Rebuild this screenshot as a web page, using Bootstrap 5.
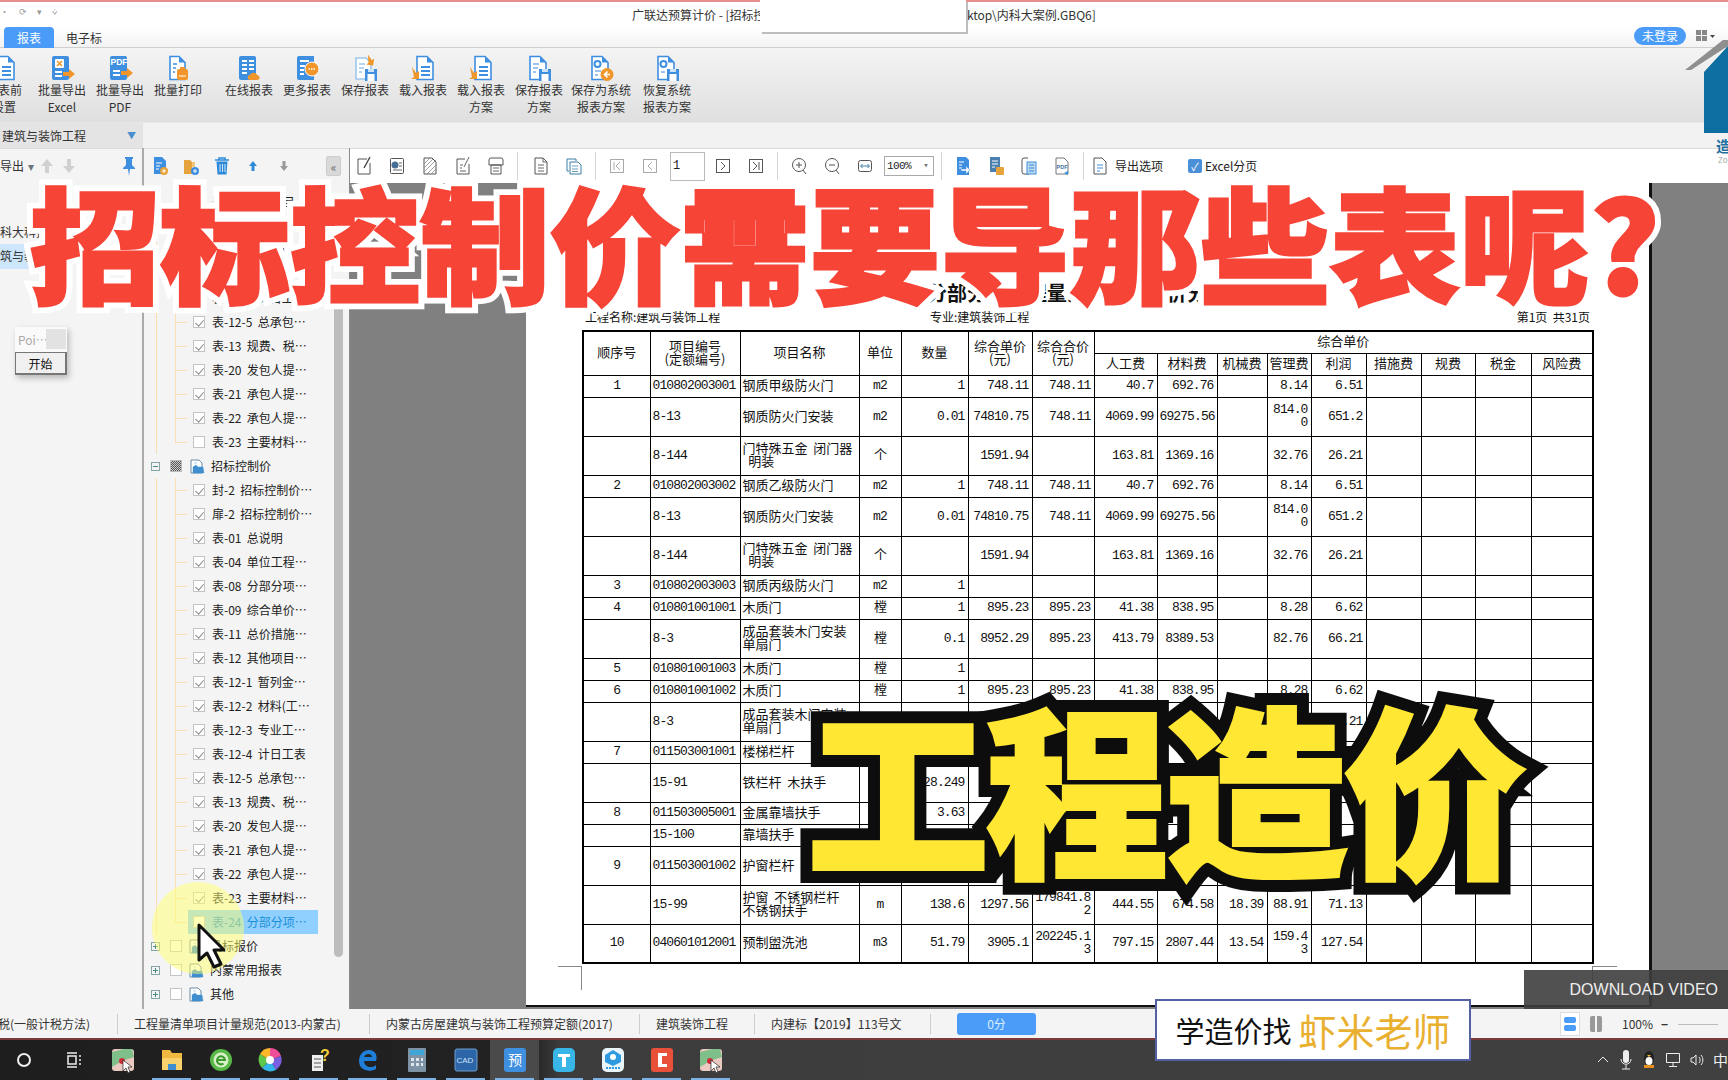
<!DOCTYPE html>
<html lang="zh-CN">
<head>
  <meta charset="UTF-8">
  <meta name="viewport" content="width=device-width, initial-scale=1.0">
  <title>广联达预算计价</title>
  <link href="https://cdn.jsdelivr.net/npm/bootstrap@5.3.0/dist/css/bootstrap.min.css" rel="stylesheet">
  <style>
    html, body { margin: 0; width: 1728px; height: 1080px; overflow: hidden; }
    body { position: relative; font: 12px/1.2 "Noto Sans CJK SC", sans-serif; color: #333; background: #f4f4f4; }
    .app { width: 1728px; height: 1080px; }

    /* 标题栏 */
    .title-row { height: 27px; border-top: 2px solid #e58f8f; background: #fff; position: relative; font-size: 12px; }
    .title-text { margin-left: 632px; line-height: 25px; white-space: nowrap; }
    .qa-tools { position: absolute; left: 0; top: 5px; color: #999; font-size: 9px; letter-spacing: 4px; }
    .tab-row { height: 21px; background: linear-gradient(#fff, #f3f3f3); border-bottom: 1px solid #cfcfcf; position: relative; }
    .tab-on { margin-left: 4px; width: 50px; height: 21px; line-height: 21px; text-align: center; color: #fff; background: #4a9cf8; border-radius: 4px 4px 0 0; }
    .tab-off { margin-left: 12px; line-height: 21px; }
    .login-pill { position: absolute; left: 1634px; top: 0; width: 52px; height: 18px; line-height: 18px; border-radius: 9px; text-align: center; color: #fff; background: #4a9cf8; }
    .grid-ic { position: absolute; left: 1696px; top: 3px; }

    /* 功能区 */
    .ribbon { height: 74px; background: linear-gradient(#f4f4f4, #dfdfdf); overflow: hidden; position: relative; }
    .rb-btn { width: 58px; flex: none; text-align: center; padding-top: 7px; line-height: 17px; white-space: nowrap; }
    .rb-btn svg { display: block; width: 26px; height: 26px; margin: 0 auto; }
    .rb-first { margin-left: -25px; }
    .rb-gap { margin-left: 13px; }
    .rb-wide { width: 66px; }
    .rb-last { margin-left: 4px; }
    .strip { height: 26px; background: #f2f2f2; border-top: 1px solid #e8e8e8; }
    .strip-left { width: 143px; background: #e4e4e4; padding-left: 2px; line-height: 25px; }
    .strip-caret { margin-left: auto; margin-right: 7px; color: #4a8fd0; font-size: 9px; }

    /* 工作区 */
    .work { height: 861px; }
    .left-col { width: 143px; flex: none; position: relative; background: #f4f4f4; border-right: 1px solid #aaa; overflow: hidden; }
    .bar { height: 35px; border-top: 1px solid #dcdcdc; background: #f4f4f4; }
    .left-list { padding-top: 37px; }
    .left-row { height: 24px; line-height: 24px; white-space: nowrap; margin-left: -12px; }
    .left-sel { background: #cde6fb; margin-left: 0; width: 34px; height: 25px; overflow: hidden; }
    .poi-box { position: absolute; left: 15px; top: 179px; width: 52px; box-shadow: 2px 3px 6px rgba(0,0,0,.25); }
    .poi-top { height: 25px; background: #fafafa; color: #aaa; line-height: 25px; padding-left: 3px; position: relative; }
    .poi-top i { position: absolute; right: 1px; top: 2px; width: 20px; height: 20px; background: #e2e2e2; }
    .poi-btn { height: 23px; line-height: 21px; text-align: center; background: #f0f0f0; color: #111; border: 1px solid #777; border-right-width: 2px; border-bottom-width: 2px; }

    .tree-col { width: 207px; flex: none; background: #f4f4f4; border-right: 1px solid #8a8a8a; position: relative; overflow: hidden; border-left: 1px solid #aaa; }
    .tree-col .tool { width: 31px; }
    .tree-list { padding-top: 7px; }
    .t-leaf { height: 24px; padding-left: 44px; --ln: #fadfb6;
      background:
        linear-gradient(var(--ln), var(--ln)) 12px 0/1px 100% no-repeat,
        linear-gradient(var(--ln), var(--ln)) 31px 0/1px 100% no-repeat,
        linear-gradient(var(--ln), var(--ln)) 31px 50%/12px 1px no-repeat; }
    .t-leaf.t-last { background:
        linear-gradient(var(--ln), var(--ln)) 12px 0/1px 100% no-repeat,
        linear-gradient(var(--ln), var(--ln)) 31px 0/1px 50% no-repeat,
        linear-gradient(var(--ln), var(--ln)) 31px 50%/12px 1px no-repeat; }
    .t-in { width: 130px; height: 24px; padding-left: 5px; white-space: nowrap; color: #222; }
    .t-on { background: #8fd0ff; color: #1a8fd8; }
    .t-cb { width: 12px; height: 12px; border: 1px solid #c4c4c4; background: #fff; flex: none; margin-right: 7px; position: relative; }
    .t-cb.ok::after { content: ""; position: absolute; left: 3px; top: 1px; width: 5px; height: 8px; border: solid #8a8a8a; border-width: 0 1px 1px 0; transform: rotate(40deg); }
    .t-cb.mix { background: repeating-conic-gradient(#555 0 25%, #ccc 0 50%) 0 0/2px 2px; border-color: #bbb; margin-right: 8px; }
    .t-parent { height: 24px; padding-left: 7px; color: #222; }
    .t-box { width: 9px; height: 9px; border: 1px solid #86a6a6; color: #4d8a8a; flex: none; margin-right: 10px; position: relative; }
    .t-box::before { content: ""; position: absolute; left: 1px; right: 1px; top: 3px; height: 1px; background: #4d8a8a; }
    .t-box.plus::after { content: ""; position: absolute; top: 1px; bottom: 1px; left: 3px; width: 1px; background: #4d8a8a; }
    .t-folder { width: 15px; height: 15px; flex: none; margin-right: 6px; }
    .t-scroll { position: absolute; left: 190px; top: 140px; width: 9px; height: 669px; background: #bcbcbc; border-radius: 5px; }
    .t-collapse { width: 15px; height: 20px; background: #d9d9d9; color: #666; font-size: 12px; line-height: 19px; text-align: center; border: 1px solid #ccc; border-radius: 2px; }

    .viewer { flex: 1; min-width: 0; }
    .view-bar { height: 35px; background: #fff; border-top: 1px solid #dcdcdc; padding-left: 0; }
    .view-start { margin-left: -3px; }
    .tool { width: 33px; height: 34px; flex: none; display: flex; align-items: center; justify-content: center; }
    .tool svg { width: 18px; height: 20px; }
    .tool-sep { width: 1px; height: 28px; background: #d5d5d5; margin: 0 4.5px; flex: none; }
    .sep-wide { margin-right: 6.5px; }
    .sep-tight { margin-right: 1.5px; }
    .tool-opt { width: 30px; }
    .page-no { width: 35px; height: 29px; border: 1px solid #bbb; padding-left: 2px; line-height: 27px; font-family: "Liberation Mono", monospace; color: #222; margin-right: 1px; }
    .zoom-box { width: 50px; height: 20px; border: 1px solid #aaa; font: 11px/18px "Liberation Mono", monospace; letter-spacing: -.6px; padding-left: 2px; margin-left: 3px; margin-right: 2px; position: relative; color: #222; }
    .zoom-box::after { content: "▾"; position: absolute; right: 5px; top: 0; color: #777; font-size: 9px; }
    .view-lbl { color: #222; white-space: nowrap; }
    .xl-check { width: 14px; height: 14px; border-radius: 2px; background: #4a90d8; color: #fff; margin-left: 25px; margin-right: 3px; font-size: 11px; line-height: 14px; text-align: center; }

    .paper-wrap { height: 826px; background: #808080; padding-left: 176px; overflow: hidden; }
    .paper { width: 1126px; height: 824px; background: #fff; border-right: 3px solid #111; border-bottom: 2px solid #111; position: relative; padding: 99px 0 0 56px; color: #111; }
    .paper-title { height: 22px; width: 1010px; text-align: center; font-size: 20px; line-height: 22px; font-weight: 700; }
    .paper-info { width: 1010px; height: 26px; font-size: 12px; line-height: 26px; padding: 0 2px 0 3px; position: relative; }
    .paper-info .mid { position: absolute; left: 348px; }
    .crop-a { position: absolute; top: 783px; left: 32px; width: 24px; height: 24px; border: solid #888; border-width: 1px 1px 0 0; }
    .crop-b { position: absolute; top: 783px; left: 1066px; width: 25px; height: 24px; border: solid #888; border-width: 1px 0 0 1px; }

    /* 报表表格 */
    .rpt { width: 1010px; table-layout: fixed; margin: 0; border: 2px solid #000; color: #111; }
    .rpt.table > :not(caption) > * > * { padding: 0 2px 3px; border: 1px solid #000; background: #fff; box-shadow: none; vertical-align: middle; font-size: 13px; line-height: 13px; color: #111; overflow: hidden; white-space: nowrap; }
    .rpt thead th { font-weight: 400; text-align: center; }
    .rpt .rw-s { height: 22px; }
    .rpt .rw-t { height: 39px; }
    .rpt .rw-h1 { height: 22px; }
    .rpt.table > :not(caption) > * > .dg { font-family: "Liberation Mono", "Noto Sans CJK SC", monospace; letter-spacing: -.9px; padding-bottom: 1px; }
    .rpt.table > :not(caption) > * > .rt { text-align: right; padding-right: 3px; }
    .rpt.table > :not(caption) > * > .ct { text-align: center; }

    /* 状态栏 */
    .status { height: 31px; background: #f4f4f4; border-bottom: 2px solid #7d3b3b; position: relative; white-space: nowrap; overflow: hidden; }
    .st-item { height: 20px; line-height: 20px; border-right: 1px solid #ccc; flex: none; padding-left: 16px; }
    .st-tax { width: 132px; padding-left: 0; margin-left: -14px; }
    .st-list { width: 252px; }
    .st-quota { width: 270px; }
    .st-major { width: 115px; }
    .st-doc { width: 176px; }
    .st-score { margin-left: 26px; width: 79px; height: 22px; line-height: 22px; background: #4a9cf8; color: #dbeeff; text-align: center; border-radius: 3px; }
    .st-right { position: absolute; left: 1560px; top: 3px; height: 24px; }
    .view-on { width: 20px; height: 24px; border: 1px solid #ddd; background: #fff; padding: 4px 3px; }
    .view-on i { display: block; height: 6px; background: #4a9cf8; border-radius: 2px; margin-bottom: 2px; }
    .view-two { width: 12px; height: 16px; margin: 0 20px 0 10px; background: linear-gradient(90deg, #999 0 45%, transparent 45% 55%, #999 55%); border-radius: 2px; }
    .slider-line { width: 40px; height: 1px; background: #bbb; margin-left: 10px; position: relative; }

    /* 任务栏 */
    .taskbar { height: 40px; background: linear-gradient(90deg, #1e1e1e 0, #222 530px, #3c3c3c 560px, #404040 100%); position: relative; }
    .tk { width: 49px; height: 40px; flex: none; display: flex; align-items: center; justify-content: center; position: relative; }
    .tk svg { width: 26px; height: 28px; }
    .tk-sys { width: 48px; }
    .tk-pin { margin-left: 2px; }
    .tk-run::after { content: ""; position: absolute; left: 5px; right: 5px; bottom: 0; height: 2px; background: #79b4e4; }
    .tk-cur { background: #4a4a4a; }
    .tray { position: absolute; right: 0; top: 0; height: 40px; color: #eee; font-size: 15px; }
    .tray svg { display: block; }

    /* 覆盖层 */
    .popup-blank { position: absolute; left: 760px; top: 0; width: 206px; height: 32px; background: #fff; box-shadow: 2px 2px 0 #bdbdbd; }
    .house { position: absolute; left: 1685px; top: 40px; width: 43px; height: 130px; }
    .house-name { position: absolute; left: 1716px; top: 137px; color: #1f6f9f; font-size: 15px; font-weight: 700; }
    .house-sub { position: absolute; left: 1718px; top: 155px; color: #aaa; font-size: 8px; }
    .head-red { position: absolute; left: 30px; top: 162px; white-space: nowrap; font-size: 130px; line-height: 160px; font-weight: 900; color: #f64437; -webkit-text-stroke: 15px #fff; paint-order: stroke fill; z-index: 5; transform: scaleY(.96); transform-origin: top; }
    .head-red::before { content: attr(data-t); position: absolute; left: 0; top: 0; -webkit-text-stroke: 3px #f64437; }
    .head-yel { position: absolute; left: 807px; top: 679px; white-space: nowrap; font-size: 182px; line-height: 210px; font-weight: 900; color: #ffe733; -webkit-text-stroke: 28px #0d0d0d; paint-order: stroke fill; letter-spacing: -3px; z-index: 6; }
    .head-yel::before { content: attr(data-t); position: absolute; left: 0; top: 0; -webkit-text-stroke: 4px #ffe733; }
    .spot { position: absolute; left: 152px; top: 882px; width: 92px; height: 92px; border-radius: 50%; background: rgba(255,255,110,.5); z-index: 3; }
    .cursor-ic { position: absolute; left: 196px; top: 923px; width: 29px; height: 46px; z-index: 4; }
    .dl-box { position: absolute; left: 1524px; top: 970px; width: 204px; height: 39px; background: rgba(62,62,62,.9); color: #eee; font: 16px/39px "Liberation Sans", sans-serif; text-align: right; padding-right: 10px; z-index: 7; }
    .teacher { position: absolute; left: 1155px; top: 999px; width: 316px; height: 62px; background: #fff; border: 2px solid #5361a3; z-index: 8; white-space: nowrap; }
    .teacher b { font-weight: 400; font-size: 29px; color: #111; margin-right: 7px; }
    .teacher em { font-style: normal; font-size: 38px; color: #e9b02f; }
  </style>
</head>
<body>
  <!-- 图标 -->
  <svg width="0" height="0" class="position-absolute">
    <symbol id="r-xls" viewBox="0 0 26 26"><rect x="3" y="1" width="17" height="24" rx="2" fill="#3f8fe0"/><rect x="6" y="4" width="9" height="9" rx="1" fill="#fff"/><path d="M8 6l5 5m0-5l-5 5" stroke="#f0962a" stroke-width="1.6"/><path d="M6 17h7M6 21h7" stroke="#fff" stroke-width="2"/><path d="M14 17h6v-3l6 5-6 5v-3h-6z" fill="#f0962a"/></symbol>
    <symbol id="r-pdf" viewBox="0 0 26 26"><rect x="3" y="1" width="17" height="24" rx="2" fill="#3f8fe0"/><text x="3.5" y="10" font-size="8.5" fill="#fff" font-family="Liberation Sans" font-weight="700">PDF</text><path d="M6 16h7M6 20h7" stroke="#fff" stroke-width="2"/><path d="M14 16h6v-3l6 5-6 5v-3h-6z" fill="#f0962a"/></symbol>
    <symbol id="r-print" viewBox="0 0 26 26"><path d="M5 1.5h9l6 6v17H5z" fill="#fff" stroke="#3f8fe0" stroke-width="1.6"/><path d="M14 1.5v6h6z" fill="#3f8fe0"/><path d="M8 9h4M8 13h3M8 17h2" stroke="#3f8fe0" stroke-width="1.6"/><rect x="12" y="14" width="11" height="11" rx="2" fill="#f0962a"/><rect x="15" y="12" width="5" height="3" fill="#f0962a"/><path d="M14 21h7" stroke="#fff"/></symbol>
    <symbol id="r-online" viewBox="0 0 26 26"><rect x="3" y="1" width="17" height="24" rx="2" fill="#3f8fe0"/><path d="M6 6h5m2 0h5M6 10h5m2 0h5M6 14h5m2 0h5M6 18h5" stroke="#fff" stroke-width="2"/><path d="M14 25c-3 0-3-5 0-5 1-3 6-3 7 0 3 0 4 5 0 5z" fill="#f0962a"/></symbol>
    <symbol id="r-more" viewBox="0 0 26 26"><path d="M5 1h15v24H5a2 2 0 0 1-2-2V3a2 2 0 0 1 2-2z" fill="#3f8fe0"/><path d="M6 6h9M6 11h5M6 15h4M6 19h4" stroke="#fff" stroke-width="1.8"/><circle cx="18" cy="14" r="7" fill="#f0962a" stroke="#fff"/><path d="M14.5 14h1.500m1 0h1.500m1 0h1.500" stroke="#fff" stroke-width="1.500"/></symbol>
    <symbol id="r-save" viewBox="0 0 26 26"><path d="M4 3h10l5 5v16H4z" fill="#fff" stroke="#9cc8ee" stroke-width="1.6"/><path d="M7 9h6M7 13h5M7 17h3" stroke="#9cc8ee" stroke-width="1.6"/><path d="M15 0l5 5 2-2v7h-7l2-2z" fill="#f0962a" transform="rotate(10 18 5)"/><rect x="13" y="14" width="12" height="12" fill="#3f8fe0"/><rect x="15.500" y="19" width="7" height="7" fill="#fff"/><rect x="16" y="14" width="6" height="3" fill="#cfe3f6"/></symbol>
    <symbol id="r-load" viewBox="0 0 26 26"><path d="M7 1.500h10l6 6v17H7z" fill="#fff" stroke="#3f8fe0" stroke-width="1.600"/><path d="M17 1.500v6h6z" fill="#3f8fe0"/><path d="M11 12h9M11 16h9M11 20h9" stroke="#3f8fe0" stroke-width="1.800"/><path d="M2 12l4 6 3-2v8H1l3-2z" fill="#f0962a"/></symbol>
    <symbol id="r-saveb" viewBox="0 0 26 26"><path d="M4 1.500h10l6 6v17H4z" fill="#fff" stroke="#3f8fe0" stroke-width="1.600"/><path d="M14 1.500v6h6z" fill="#3f8fe0"/><path d="M7 9h6M7 13h5M7 17h3" stroke="#7db3e6" stroke-width="1.600"/><rect x="13" y="14" width="12" height="12" fill="#3f8fe0"/><rect x="15.500" y="19" width="7" height="7" fill="#fff"/><rect x="16" y="14" width="6" height="3" fill="#cfe3f6"/></symbol>
    <symbol id="r-sys" viewBox="0 0 26 26"><path d="M4 1.500h10l6 6v17H4z" fill="#fff" stroke="#3f8fe0" stroke-width="1.600"/><path d="M14 1.500v6h6z" fill="#3f8fe0"/><circle cx="9.500" cy="9" r="3" fill="none" stroke="#3f8fe0" stroke-width="2"/><path d="M7 16h6M7 20h3" stroke="#7db3e6" stroke-width="1.600"/><circle cx="19" cy="19.500" r="6.500" fill="#f0962a"/><path d="M22 19.500h-5m2.500-3l-3 3 3 3" fill="none" stroke="#fff" stroke-width="1.600"/></symbol>
    <symbol id="r-rest" viewBox="0 0 26 26"><path d="M4 1.500h10l6 6v17H4z" fill="#fff" stroke="#3f8fe0" stroke-width="1.600"/><path d="M14 1.500v6h6z" fill="#3f8fe0"/><circle cx="9.500" cy="9" r="3" fill="none" stroke="#3f8fe0" stroke-width="2"/><path d="M7 17h4" stroke="#7db3e6" stroke-width="1.600"/><rect x="13" y="14" width="12" height="12" fill="#3f8fe0"/><rect x="15.500" y="19" width="7" height="7" fill="#fff"/><rect x="16" y="14" width="6" height="3" fill="#cfe3f6"/></symbol>

    <symbol id="t-edit" viewBox="0 0 18 20"><path d="M3 3h9M3 3v15h12V7" fill="none" stroke="#555"/><path d="M15 1l-6 11" stroke="#444" stroke-width="1.400"/></symbol>
    <symbol id="t-chart" viewBox="0 0 18 20"><rect x="2.500" y="2.500" width="13" height="15" rx="1" fill="none" stroke="#555"/><circle cx="7" cy="9" r="3.500" fill="#466f96"/><path d="M11 7h3M11 10h3M5 14h9" stroke="#666"/></symbol>
    <symbol id="t-hatch" viewBox="0 0 18 20"><path d="M3 2h8l4 4v12H3z" fill="none" stroke="#555"/><path d="M3 8l6-6M3 12l9-9M3 16l12-12M6 18l9-9M10 18l5-5" stroke="#888" stroke-width=".8"/></symbol>
    <symbol id="t-note" viewBox="0 0 18 20"><path d="M3 3h8M3 3v15h12V8" fill="none" stroke="#555"/><path d="M15 1l-5 10M6 9h3M6 12h2M6 15h6" stroke="#666"/></symbol>
    <symbol id="t-print" viewBox="0 0 18 20"><path d="M4 2h10a2 2 0 0 1 2 2v5H2V4a2 2 0 0 1 2-2zM4 9h10v9H4z" fill="none" stroke="#555"/><path d="M6 12h6M6 15h6" stroke="#666"/></symbol>
    <symbol id="t-doc" viewBox="0 0 18 20"><path d="M3 2h8l4 4v12H3z" fill="none" stroke="#555"/><path d="M11 2v4h4M6 9h6M6 12h6M6 15h6" fill="none" stroke="#666"/></symbol>
    <symbol id="t-docs" viewBox="0 0 18 20"><path d="M2 3h9v2M2 3v12h2" fill="none" stroke="#3d7fa6"/><path d="M5 6h8l3 3v9H5z" fill="none" stroke="#3d7fa6"/><path d="M7 10h6M7 13h6M7 15.500h6" stroke="#6a9fc0"/></symbol>
    <symbol id="t-first" viewBox="0 0 18 20"><rect x="2.500" y="3.500" width="13" height="13" fill="none" stroke="#aaa"/><path d="M6 6v8M12 6l-4 4 4 4" fill="none" stroke="#aaa"/></symbol>
    <symbol id="t-prev" viewBox="0 0 18 20"><rect x="2.500" y="3.500" width="13" height="13" fill="none" stroke="#aaa"/><path d="M11 6l-4 4 4 4" fill="none" stroke="#aaa"/></symbol>
    <symbol id="t-next" viewBox="0 0 18 20"><rect x="2.500" y="3.500" width="13" height="13" fill="none" stroke="#555"/><path d="M7 6l4 4-4 4" fill="none" stroke="#555"/></symbol>
    <symbol id="t-last" viewBox="0 0 18 20"><rect x="2.500" y="3.500" width="13" height="13" fill="none" stroke="#555"/><path d="M12 6v8M6 6l4 4-4 4" fill="none" stroke="#555"/></symbol>
    <symbol id="t-zin" viewBox="0 0 18 20"><circle cx="9" cy="9" r="6.500" fill="none" stroke="#555"/><path d="M9 6v6M6 9h6M13 14l3 4" stroke="#555"/></symbol>
    <symbol id="t-zout" viewBox="0 0 18 20"><circle cx="9" cy="9" r="6.500" fill="none" stroke="#555"/><path d="M6 9h6M13 14l3 4" stroke="#555"/></symbol>
    <symbol id="t-fit" viewBox="0 0 18 20"><rect x="2.500" y="4.500" width="13" height="11" rx="2" fill="none" stroke="#555"/><path d="M5 10h8M6.500 8l-2 2 2 2M11.500 8l2 2-2 2" fill="none" stroke="#3d7fa6"/></symbol>
    <symbol id="t-exp" viewBox="0 0 18 20"><path d="M3 1h9l3 3v15H3z" fill="#3f8fe0"/><path d="M5 6h5M5 9h3M5 12h3" stroke="#fff"/><path d="M7 13h5v-3l4 4-4 4v-3H7z" fill="#fff" stroke="#3f8fe0" stroke-width=".5"/></symbol>
    <symbol id="t-expx" viewBox="0 0 18 20"><path d="M3 1h10v15H3z" fill="#4a7fae"/><path d="M5 5h6M5 8h6M5 11h3" stroke="#fff"/><rect x="9" y="11" width="8" height="8" rx="1" fill="#e6a33c"/></symbol>
    <symbol id="t-word" viewBox="0 0 18 20"><path d="M8 2H4a2 2 0 0 0-2 2v12a2 2 0 0 0 2 2h5" fill="none" stroke="#555"/><rect x="7" y="6" width="9" height="12" fill="#bcd8ee" stroke="#3f8fe0"/><path d="M9 9h5M9 12h5M9 15h5" stroke="#3f8fe0"/></symbol>
    <symbol id="t-pdf" viewBox="0 0 18 20"><path d="M3 2h8l4 4v12H3z" fill="#fff" stroke="#777"/><text x="3.500" y="13" font-size="5.500" fill="#3f6f9f" font-family="Liberation Sans" font-weight="700">PDF</text><path d="M11 17l4 2v-4" fill="#3f8fe0"/></symbol>
    <symbol id="t-opt" viewBox="0 0 18 20"><path d="M3 2h8l4 4v12H3z" fill="#fff" stroke="#555"/><path d="M6 9h6M6 12h6M6 15h3" stroke="#3f8fe0"/></symbol>

    <symbol id="s-add" viewBox="0 0 18 20"><path d="M3 1h8l4 4v13H3z" fill="#3f8fe0"/><path d="M5 7h6M5 10h4M5 13h3" stroke="#fff"/><circle cx="13" cy="15" r="4" fill="#e6a33c"/><path d="M11 15h4M13 13v4" stroke="#fff"/></symbol>
    <symbol id="s-fold" viewBox="0 0 18 20"><path d="M2 4h6l2 2v12H2z" fill="#e6a33c"/><path d="M10 6h3v5h-3z" fill="#f3c67e"/><circle cx="13" cy="15" r="4" fill="#3f8fe0"/><path d="M11 15h4M13 13v4" stroke="#fff"/></symbol>
    <symbol id="s-del" viewBox="0 0 18 20"><path d="M2 4h14M6 4V2h6v2" fill="none" stroke="#2e8ad8" stroke-width="1.500"/><path d="M3.500 5.500h11l-1 13h-9z" fill="#2e8ad8"/><path d="M7 8v8M9.500 8v8M12 8v8" stroke="#fff" stroke-width=".8"/></symbol>
    <symbol id="s-up" viewBox="0 0 18 20"><path d="M9 5l4 5h-2.500v5h-3v-5H5z" fill="#2e8ad8"/></symbol>
    <symbol id="s-down" viewBox="0 0 18 20"><path d="M9 15l4-5h-2.500V5h-3v5H5z" fill="#9a9a9a"/></symbol>
    <symbol id="s-gup" viewBox="0 0 18 20"><path d="M9 3l6 7h-4v7H7v-7H3z" fill="#d0d0d0"/></symbol>
    <symbol id="s-gdn" viewBox="0 0 18 20"><path d="M9 17l6-7h-4V3H7v7H3z" fill="#d0d0d0"/></symbol>
    <symbol id="s-pin" viewBox="0 0 18 20"><path d="M5 1h8v2h-1v6l3 3v1H3v-1l3-3V3H5zM8 13h2l-1 7z" fill="#3f8fe0"/></symbol>
    <symbol id="s-fdr" viewBox="0 0 15 15"><path d="M1 1h8l3 3v10H1z" fill="#fff" stroke="#6b8ba6"/><path d="M4 4h3M3 8l3-2 2 2h5l1 6H3z" fill="#3f8fd0" stroke="#3f8fd0" stroke-width=".4"/></symbol>
  </svg>

  <div class="app d-flex flex-column">
    <!-- 标题栏 -->
    <div class="title-row">
      <div class="qa-tools">· ⟳ ▾ ⩒</div>
      <div class="title-text">广联达预算计价 - [招标控制价文件C:\Users\Administrator\Desktop\内科大案例.GBQ6]</div>
    </div>
    <div class="tab-row d-flex">
      <div class="tab-on">报表</div>
      <div class="tab-off">电子标</div>
      <div class="login-pill">未登录</div>
      <svg class="grid-ic" width="20" height="12" viewBox="0 0 20 12"><path d="M0 0h5v5H0zM6 0h5v5H6zM0 6h5v5H0zM6 6h5v5H6z" fill="#888"/><path d="M14 5h5l-2.500 3z" fill="#444"/></svg>
    </div>

    <!-- 功能区 -->
    <div class="ribbon d-flex">
      <div class="rb-btn rb-first"><svg><use href="#r-load"/></svg>报表前<br>设置</div>
      <div class="rb-btn"><svg><use href="#r-xls"/></svg>批量导出<br>Excel</div>
      <div class="rb-btn"><svg><use href="#r-pdf"/></svg>批量导出<br>PDF</div>
      <div class="rb-btn"><svg><use href="#r-print"/></svg>批量打印</div>
      <div class="rb-btn rb-gap"><svg><use href="#r-online"/></svg>在线报表</div>
      <div class="rb-btn"><svg><use href="#r-more"/></svg>更多报表</div>
      <div class="rb-btn"><svg><use href="#r-save"/></svg>保存报表</div>
      <div class="rb-btn"><svg><use href="#r-load"/></svg>载入报表</div>
      <div class="rb-btn"><svg><use href="#r-load"/></svg>载入报表<br>方案</div>
      <div class="rb-btn"><svg><use href="#r-saveb"/></svg>保存报表<br>方案</div>
      <div class="rb-btn rb-wide"><svg><use href="#r-sys"/></svg>保存为系统<br>报表方案</div>
      <div class="rb-btn rb-last"><svg><use href="#r-rest"/></svg>恢复系统<br>报表方案</div>
    </div>
    <div class="strip d-flex">
      <div class="strip-left d-flex">建筑与装饰工程<span class="strip-caret">▼</span></div>
    </div>

    <!-- 工作区 -->
    <div class="work d-flex">
      <div class="left-col">
        <div class="bar d-flex align-items-center position-relative">
          <span>导出</span><span class="ms-1 text-secondary">▾</span>
          <svg width="18" height="20" class="ms-1"><use href="#s-gup"/></svg>
          <svg width="18" height="20" class="ms-1"><use href="#s-gdn"/></svg>
          <svg width="18" height="20" class="ms-auto me-1"><use href="#s-pin"/></svg>
        </div>
        <div class="left-list">
          <div class="left-row overflow-hidden">内科大科技…</div>
          <div class="left-row left-sel">筑与装饰工程</div>
        </div>
        <div class="poi-box">
          <div class="poi-top">Poi…<i></i></div>
          <div class="poi-btn">开始</div>
        </div>
      </div>

      <div class="tree-col">
        <div class="bar d-flex align-items-center">
          <div class="tool"><svg><use href="#s-add"/></svg></div>
          <div class="tool"><svg><use href="#s-fold"/></svg></div>
          <div class="tool"><svg><use href="#s-del"/></svg></div>
          <div class="tool"><svg><use href="#s-up"/></svg></div>
          <div class="tool"><svg><use href="#s-down"/></svg></div>
          <div class="t-collapse ms-auto me-2">«</div>
        </div>
        <div class="tree-list" id="treeList"></div>
        <div class="t-scroll"></div>
      </div>

      <div class="viewer">
        <div class="view-bar d-flex align-items-center">
          <div class="tool view-start"><svg><use href="#t-edit"/></svg></div>
          <div class="tool"><svg><use href="#t-chart"/></svg></div>
          <div class="tool"><svg><use href="#t-hatch"/></svg></div>
          <div class="tool"><svg><use href="#t-note"/></svg></div>
          <div class="tool"><svg><use href="#t-print"/></svg></div>
          <div class="tool-sep sep-wide"></div>
          <div class="tool"><svg><use href="#t-doc"/></svg></div>
          <div class="tool"><svg><use href="#t-docs"/></svg></div>
          <div class="tool-sep"></div>
          <div class="tool"><svg><use href="#t-first"/></svg></div>
          <div class="tool"><svg><use href="#t-prev"/></svg></div>
          <div class="page-no ms-1">1</div>
          <div class="tool"><svg><use href="#t-next"/></svg></div>
          <div class="tool"><svg><use href="#t-last"/></svg></div>
          <div class="tool-sep"></div>
          <div class="tool"><svg><use href="#t-zin"/></svg></div>
          <div class="tool"><svg><use href="#t-zout"/></svg></div>
          <div class="tool"><svg><use href="#t-fit"/></svg></div>
          <div class="zoom-box">100%</div>
          <div class="tool-sep"></div>
          <div class="tool"><svg><use href="#t-exp"/></svg></div>
          <div class="tool"><svg><use href="#t-expx"/></svg></div>
          <div class="tool"><svg><use href="#t-word"/></svg></div>
          <div class="tool"><svg><use href="#t-pdf"/></svg></div>
          <div class="tool-sep sep-tight"></div>
          <div class="tool tool-opt"><svg><use href="#t-opt"/></svg></div>
          <span class="view-lbl">导出选项</span>
          <div class="xl-check">✓</div>
          <span class="view-lbl">Excel分页</span>
        </div>
        <div class="paper-wrap">
          <div class="paper">
            <div class="paper-title">分部分项工程量清单综合单价分析表</div>
            <div class="paper-info d-flex justify-content-between">
              <span>工程名称:建筑与装饰工程</span>
              <span class="mid">专业:建筑装饰工程</span>
              <span>第1页&nbsp;&nbsp;共31页</span>
            </div>
            <table class="table rpt">
              <colgroup id="rptCols"></colgroup>
              <thead>
                <tr class="rw-h1">
                  <th rowspan="2">顺序号</th>
                  <th rowspan="2">项目编号<br>(定额编号)</th>
                  <th rowspan="2">项目名称</th>
                  <th rowspan="2">单位</th>
                  <th rowspan="2">数量</th>
                  <th rowspan="2">综合单价<br>(元)</th>
                  <th rowspan="2">综合合价<br>(元)</th>
                  <th colspan="9">综合单价</th>
                </tr>
                <tr class="rw-h1">
                  <th>人工费</th><th>材料费</th><th>机械费</th><th>管理费</th><th>利润</th><th>措施费</th><th>规费</th><th>税金</th><th>风险费</th>
                </tr>
              </thead>
              <tbody id="rptBody"></tbody>
            </table>
            <div class="crop-a"></div>
            <div class="crop-b"></div>
          </div>
        </div>
      </div>
    </div>

    <!-- 状态栏 -->
    <div class="status d-flex align-items-center">
      <div class="st-item st-tax">计税(一般计税方法)</div>
      <div class="st-item st-list">工程量清单项目计量规范(2013-内蒙古)</div>
      <div class="st-item st-quota">内蒙古房屋建筑与装饰工程预算定额(2017)</div>
      <div class="st-item st-major">建筑装饰工程</div>
      <div class="st-item st-doc">内建标【2019】113号文</div>
      <div class="st-score">0分</div>
      <div class="st-right d-flex align-items-center">
        <div class="view-on"><i></i><i></i></div>
        <div class="view-two"></div>
        <span>100%</span>
        <span class="ms-2 fw-bold">−</span>
        <div class="slider-line"></div>
      </div>
    </div>

    <!-- 任务栏 -->
    <div class="taskbar d-flex">
      <div class="tk tk-sys"><svg viewBox="0 0 26 28"><circle cx="13" cy="14" r="6" fill="none" stroke="#eee" stroke-width="2"/></svg></div>
      <div class="tk tk-sys"><svg viewBox="0 0 26 28"><path d="M8 7h10M8 21h10M9 10h8v8H9zM21 9v2M21 13v2M21 17v2" fill="none" stroke="#eee" stroke-width="1.500"/></svg></div>
      <div class="tk tk-pin"><svg viewBox="0 0 26 28"><rect x="2" y="3" width="22" height="22" rx="3" fill="#e9c9c0"/><path d="M2 6l12-3 8 0 2 8-12 4-10 6z" fill="#7fc08a"/><circle cx="12" cy="15" r="3" fill="#d12c3a"/><path d="M13 14v11l3-3 2 5 2-1-2-5h4z" fill="#fff" stroke="#222" stroke-width=".7"/></svg></div>
      <div class="tk tk-run"><svg viewBox="0 0 26 28"><path d="M3 4h8l2 3h10v17H3z" fill="#f0b93f"/><path d="M3 12h20v12H3z" fill="#f7d26c"/><path d="M9 24v-6h8v6z" fill="#3f8fd0"/></svg></div>
      <div class="tk tk-run"><svg viewBox="0 0 26 28"><circle cx="13" cy="14" r="11" fill="#58b947"/><circle cx="13" cy="14" r="7.500" fill="#d8f0c8"/><path d="M9 14h8a4 4 0 1 0-1.500 3.500" fill="none" stroke="#3a9a2e" stroke-width="2"/></svg></div>
      <div class="tk tk-run"><svg viewBox="0 0 26 28"><path d="M13 2a12 12 0 0 1 11 8l-11 4z" fill="#f04e98"/><path d="M24 10a12 12 0 0 1-5 14l-6-10z" fill="#7a5fe0"/><path d="M19 24a12 12 0 0 1-14-2l8-8z" fill="#35b6e8"/><path d="M5 22A12 12 0 0 1 3 8l10 6z" fill="#5fc74a"/><path d="M3 8a12 12 0 0 1 10-6v12z" fill="#fcb72b"/><circle cx="13" cy="14" r="4" fill="#fff"/></svg></div>
      <div class="tk tk-run"><svg viewBox="0 0 26 28"><rect x="6" y="9" width="11" height="16" fill="#eee"/><path d="M8 13h7M8 17h7M8 21h7" stroke="#555"/><text x="14" y="15" font-size="16" font-weight="700" fill="#f4d13a" font-family="Liberation Sans">?</text></svg></div>
      <div class="tk tk-run"><svg viewBox="0 0 26 28"><path d="M21 15H9c0 6 8 8 12 4v4c-7 4-17 1-17-8C4 7 10 4 14 4c6 0 9 5 7 11zM9 11h8c0-4-7-4-8 0z" fill="#1f7fd8"/></svg></div>
      <div class="tk tk-run"><svg viewBox="0 0 26 28"><rect x="4" y="2" width="18" height="24" rx="1" fill="#7e93a6"/><rect x="6" y="4" width="14" height="5" fill="#3ea7d8"/><path d="M7 12h3v3H7zM12 12h3v3h-3zM17 12h2v3h-2zM7 17h3v3H7zM12 17h3v3h-3zM17 17h2v3h-2z" fill="#dfe6ec"/></svg></div>
      <div class="tk tk-run"><svg viewBox="0 0 26 28"><rect x="2" y="3" width="22" height="22" rx="2" fill="#2c66a8" stroke="#6e9ccc"/><text x="3.500" y="17" font-size="8" fill="#cfe4f8" font-family="Liberation Sans">CAD</text></svg></div>
      <div class="tk tk-run tk-cur"><svg viewBox="0 0 26 28"><rect x="2" y="2" width="22" height="24" rx="3" fill="#3f8fe0"/><text x="13" y="19" text-anchor="middle" font-size="14" fill="#fff" font-family="Noto Sans CJK SC">预</text></svg></div>
      <div class="tk tk-run"><svg viewBox="0 0 26 28"><rect x="2" y="2" width="22" height="24" rx="5" fill="#38b6e8"/><path d="M7 8h12v3h-4v10h-4V11H7z" fill="#fff"/></svg></div>
      <div class="tk tk-run"><svg viewBox="0 0 26 28"><rect x="2" y="2" width="22" height="24" rx="5" fill="#eaf4fb"/><path d="M13 4l8 5v7l-8 4-8-4V9z" fill="#2e9ae0"/><circle cx="13" cy="11" r="3" fill="#fff"/><path d="M6 22h14" stroke="#2e9ae0" stroke-width="2" stroke-dasharray="2 1"/></svg></div>
      <div class="tk tk-run"><svg viewBox="0 0 26 28"><rect x="2" y="2" width="22" height="24" rx="3" fill="#e8503a"/><path d="M18 7H9v14h9v-3h-5v-8h5z" fill="#fff"/></svg></div>
      <div class="tk tk-run"><svg viewBox="0 0 26 28"><rect x="2" y="3" width="22" height="22" rx="3" fill="#e9c9c0"/><path d="M2 6l12-3 8 0 2 8-12 4-10 6z" fill="#7fc08a"/><circle cx="12" cy="15" r="3" fill="#d12c3a"/><path d="M13 14v11l3-3 2 5 2-1-2-5h4z" fill="#fff" stroke="#222" stroke-width=".7"/></svg></div>
      <div class="tray d-flex align-items-center gap-2">
        <svg width="16" height="16" viewBox="0 0 16 16"><path d="M3 10l5-5 5 5" fill="none" stroke="#eee"/></svg>
        <svg width="14" height="24" viewBox="0 0 14 24"><rect x="4" y="2" width="6" height="13" rx="3" fill="#eee"/><path d="M2 11c0 7 10 7 10 0M7 17v4M3 21h8" fill="none" stroke="#eee"/></svg>
        <svg width="16" height="24" viewBox="0 0 16 24"><ellipse cx="8" cy="10" rx="5" ry="7" fill="#222"/><ellipse cx="8" cy="13" rx="3.500" ry="4" fill="#fff"/><path d="M3 17h10v3H3z" fill="#e8901f"/><path d="M6 7h4l-2 2z" fill="#f5b82e"/></svg>
        <svg width="16" height="18" viewBox="0 0 16 18"><path d="M1.500 2.500h13v9h-13zM8 11.500v4M4 15.500h8" fill="none" stroke="#eee"/></svg>
        <svg width="16" height="16" viewBox="0 0 16 16"><path d="M2 6h2l3-3v10l-3-3H2zM10 5c1.500 2 1.500 4 0 6M12 3c2.500 3 2.500 7 0 10" fill="none" stroke="#eee"/></svg>
        <span>中</span>
      </div>
    </div>
  </div>

  <!-- 覆盖层 -->
  <div class="popup-blank"></div>
  <svg class="house" viewBox="0 0 43 130"><path d="M0 30L43 -4V6L6 30z" fill="#8f8f8f"/><path d="M19 32L43 6V93H19z" fill="#0d6fa1"/></svg>
  <div class="house-name">造</div>
  <div class="house-sub">Zo</div>
  <div class="spot"></div>
  <svg class="cursor-ic" viewBox="0 0 29 46"><path d="M3 2v35l8-7 7 14 7-3-7-14h10z" fill="#fff" stroke="#111" stroke-width="3" stroke-linejoin="round"/></svg>
  <div class="head-red" data-t="招标控制价需要导那些表呢?">招标控制价需要导那些表呢?</div>
  <div class="head-yel" data-t="工程造价">工程造价</div>
  <div class="dl-box">DOWNLOAD VIDEO</div>
  <div class="teacher d-flex align-items-center justify-content-center"><b>学造价找</b><em>虾米老师</em></div>

  <script>
    // 左侧报表树
    const groupA = ['表-12&nbsp; 其他项目…', '表-12-1&nbsp; 暂列金…', '表-12-2&nbsp; 材料(工…', '表-12-3&nbsp; 专业工…', '表-12-4&nbsp; 计日工表', '表-12-5&nbsp; 总承包…', '表-13&nbsp; 规费、税…', '表-20&nbsp; 发包人提…', '表-21&nbsp; 承包人提…', '表-22&nbsp; 承包人提…'];
    const groupB = ['封-2&nbsp; 招标控制价…', '扉-2&nbsp; 招标控制价…', '表-01&nbsp; 总说明', '表-04&nbsp; 单位工程…', '表-08&nbsp; 分部分项…', '表-09&nbsp; 综合单价…', '表-11&nbsp; 总价措施…'];

    function leaf(name, checked, cls) {
      return `<div class="t-leaf ${cls || ''}"><div class="t-in d-flex align-items-center ${cls === 't-last t-sel' ? 't-on' : ''}"><span class="t-cb ${checked ? 'ok' : ''}"></span>${name}</div></div>`;
    }
    function parent(name, open, mix) {
      return `<div class="t-parent d-flex align-items-center"><span class="t-box ${open ? '' : 'plus'}"></span><span class="t-cb ${mix ? 'mix' : ''}"></span><svg class="t-folder"><use href="#s-fdr"/></svg>${name}</div>`;
    }
    let treeHtml = groupA.map(n => leaf(n, true)).join('');
    treeHtml += leaf('表-23&nbsp; 主要材料…', false, 't-last');
    treeHtml += parent('招标控制价', true, true);
    treeHtml += groupB.map(n => leaf(n, true)).join('');
    treeHtml += groupA.map(n => leaf(n, true)).join('');
    treeHtml += leaf('表-23&nbsp; 主要材料…', true);
    treeHtml += leaf('表-24&nbsp; 分部分项…', false, 't-last t-sel');
    treeHtml += parent('投标报价') + parent('内蒙常用报表') + parent('其他');
    document.getElementById('treeList').innerHTML = treeHtml;

    // 报表数据
    const widths = [67, 90, 119, 42, 67, 64, 62, 63, 60, 50, 44, 55, 55, 54, 56, 62];
    document.getElementById('rptCols').innerHTML = widths.map(w => `<col width="${w}">`).join('');

    const door = ['', '8-13', '钢质防火门安装', 'm2', '0.01', '74810.75', '748.11', '4069.99', '69275.56', '', '814.0<br>0', '651.2'];
    const lock = ['', '8-144', '门特殊五金&nbsp; 闭门器<br>&nbsp;&nbsp;明装', '个', '', '1591.94', '', '163.81', '1369.16', '', '32.76', '26.21'];
    const kit = ['', '8-3', '成品套装木门安装<br>单扇门', '樘', '0.1', '8952.29', '895.23', '413.79', '8389.53', '', '82.76', '66.21'];
    const rows = [
      ['s', '1', '010802003001', '钢质甲级防火门', 'm2', '1', '748.11', '748.11', '40.7', '692.76', '', '8.14', '6.51'],
      ['t', ...door], ['t', ...lock],
      ['s', '2', '010802003002', '钢质乙级防火门', 'm2', '1', '748.11', '748.11', '40.7', '692.76', '', '8.14', '6.51'],
      ['t', ...door], ['t', ...lock],
      ['s', '3', '010802003003', '钢质丙级防火门', 'm2', '1'],
      ['s', '4', '010801001001', '木质门', '樘', '1', '895.23', '895.23', '41.38', '838.95', '', '8.28', '6.62'],
      ['t', ...kit],
      ['s', '5', '010801001003', '木质门', '樘', '1'],
      ['s', '6', '010801001002', '木质门', '樘', '1', '895.23', '895.23', '41.38', '838.95', '', '8.28', '6.62'],
      ['t', ...kit],
      ['s', '7', '011503001001', '楼梯栏杆', 'm'],
      ['t', '', '15-91', '铁栏杆&nbsp; 木扶手', 'm', '28.249'],
      ['s', '8', '011503005001', '金属靠墙扶手', 'm', '3.63'],
      ['s', '', '15-100', '靠墙扶手', 'm'],
      ['t', '9', '011503001002', '护窗栏杆', 'm'],
      ['t', '', '15-99', '护窗&nbsp; 不锈钢栏杆<br>不锈钢扶手', 'm', '138.6', '1297.56', '179841.8<br>2', '444.55', '674.58', '18.39', '88.91', '71.13'],
      ['t', '10', '040601012001', '预制盥洗池', 'm3', '51.79', '3905.1', '202245.1<br>3', '797.15', '2807.44', '13.54', '159.4<br>3', '127.54']
    ];

    const rptBody = document.getElementById('rptBody');
    rptBody.innerHTML = rows.map(r => {
      const cells = [];
      for (let i = 0; i < 16; i++) {
        const v = r[i + 1] || '';
        let cls = 'dg rt';
        if (i === 0 || i === 3) cls = 'dg ct';
        if (i === 1) cls = 'dg';
        if (i === 2) cls = '';
        cells.push(`<td class="${cls}">${v}</td>`);
      }
      return `<tr class="rw-${r[0]}">${cells.join('')}</tr>`;
    }).join('');
  </script>
  <script src="https://cdn.jsdelivr.net/npm/bootstrap@5.3.0/dist/js/bootstrap.bundle.min.js"></script>
</body>
</html>
